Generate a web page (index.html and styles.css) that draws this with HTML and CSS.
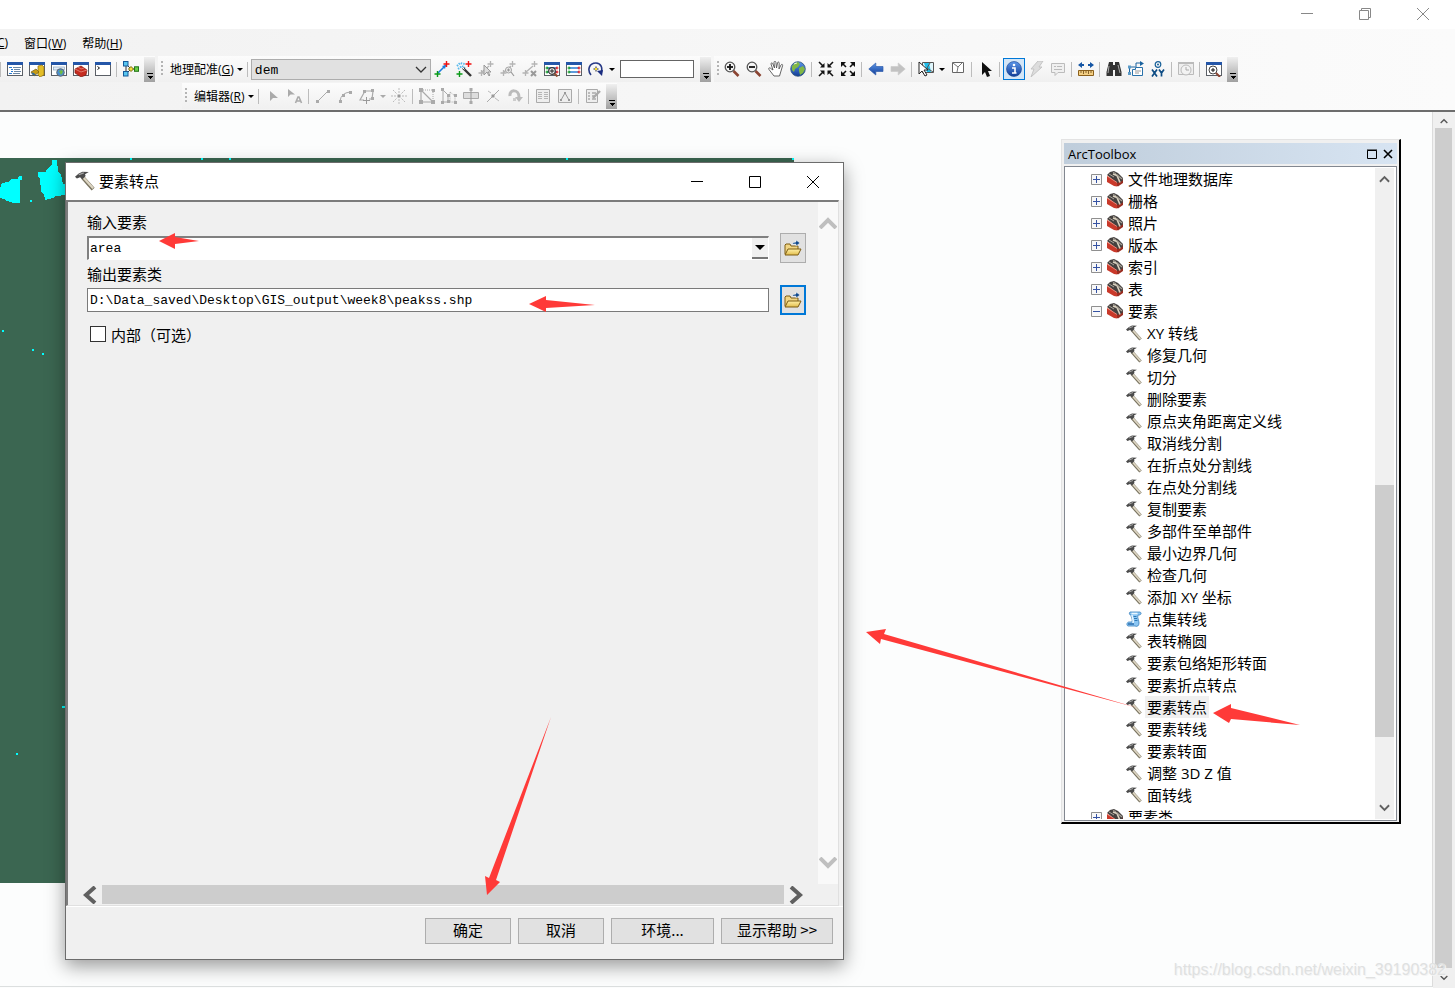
FILE: index.html
```html
<!DOCTYPE html>
<html lang="zh-CN">
<head>
<meta charset="utf-8">
<title>ArcMap</title>
<link rel="stylesheet" href="styles.css">
</head>
<body>
<svg class="defs" aria-hidden="true">
  <defs>
    <linearGradient id="gBlue" x1="0" y1="0" x2="0" y2="1"><stop offset="0" stop-color="#5b97ea"/><stop offset="1" stop-color="#123c96"/></linearGradient>
    <linearGradient id="gGold" x1="0" y1="0" x2="0" y2="1"><stop offset="0" stop-color="#fff0a8"/><stop offset="1" stop-color="#e2bd4c"/></linearGradient>
    <symbol id="win" viewBox="0 0 16 16"><rect x=".5" y="1.500" width="15" height="13" fill="#fff" stroke="#5a5f66"/><path d="M0 1h16v3H0z" fill="#2456a8"/></symbol>
    <symbol id="toc" viewBox="0 0 16 16"><use href="#win"/><path d="M2 6.500h3M4 8.500h2M4 10.500h2M2 12.500h3" stroke="#2a7bd0"/><path d="M6 6.500h8M7 8.500h6M7 10.500h7M6 12.500h7" stroke="#6a86a4"/></symbol>
    <symbol id="catalog" viewBox="0 0 16 16"><use href="#win"/><path d="M9 5l4-1 2 2v8l-4 2-2-2z" fill="#e3bd27" stroke="#8b6c10" stroke-width=".7"/><path d="M2 11l5-3 3 3-5 4z" fill="#c79b14" stroke="#6f5a16" stroke-width=".7"/><path d="M3 12l3 2" stroke="#326a9a" stroke-width="2"/></symbol>
    <symbol id="search" viewBox="0 0 16 16"><use href="#win"/><rect x="2.500" y="6" width="11" height="3" fill="#e3edf8" stroke="#8ca5bd" stroke-width=".7"/><circle cx="9.500" cy="11.500" r="3.800" fill="#4b8fd0" stroke="#606870"/><path d="M8 10l3-1 1 2-2 3z" fill="#6fbb42"/></symbol>
    <symbol id="toolwin" viewBox="0 0 16 16"><use href="#win"/><path d="M2 8l6-3 6 4-1 5-5 2-6-4z" fill="#c52c20" stroke="#7c170f" stroke-width=".7"/><path d="M2 8l6 3 6-2M5 6l3 2 3-1" fill="none" stroke="#e98d80" stroke-width=".8"/></symbol>
    <symbol id="python" viewBox="0 0 16 16"><use href="#win"/><path d="M2.500 5.500l2 1.500-2 1.500" fill="none" stroke="#111"/></symbol>
    <symbol id="model" viewBox="0 0 16 16"><path d="M3 3v10M3 3l5 5-5 5M8 8h5" fill="none" stroke="#333"/><rect x=".500" y=".500" width="4.500" height="4.500" fill="#58c6ef" stroke="#155a9a"/><rect x=".500" y="10.500" width="4.500" height="4.500" fill="#58c6ef" stroke="#155a9a"/><path d="M8 5.500l2.500 2.500L8 10.500 5.500 8z" fill="#f4dd3a" stroke="#756811"/><rect x="11.500" y="5.800" width="4" height="4.500" fill="#6bcf46" stroke="#23751a"/></symbol>
    <symbol id="addpt" viewBox="0 0 16 16"><path d="M4 12l8-8" stroke="#1c7ddd" stroke-width="1.600"/><path d="M12 4l-4 1 3 3z" fill="#1c7ddd"/><path d="M12.500 0v6M9.500 3h6" stroke="#e11" stroke-width="1.400"/><path d="M3.500 10v6M.500 13h6" stroke="#0a9a18" stroke-width="1.400"/></symbol>
    <symbol id="wand" viewBox="0 0 16 16"><path d="M1 5l3-3 5 1M2 8l4-3 3 2" fill="none" stroke="#58b9ec" stroke-width="2" stroke-dasharray="1.500 1"/><path d="M7 7l8 8" stroke="#333" stroke-width="2.400"/><path d="M6.500 6.500l2 2" stroke="#fff"/><path d="M12.500 0v6M9.500 3h6" stroke="#e11" stroke-width="1.400"/><path d="M3.500 10v6M.500 13h6" stroke="#0a9a18" stroke-width="1.400"/></symbol>
    <symbol id="gpt" viewBox="0 0 16 16"><path d="M12.500 0v6M9.500 3h6M3.500 9v6M.500 12h6M4 11l7-6" stroke="#b4b4b4" stroke-width="1.300"/></symbol>
    <symbol id="gptsel" viewBox="0 0 16 16"><use href="#gpt"/><path d="M6 4v10l3-3 2 4 1-1-2-3h3z" fill="#ddd" stroke="#999"/></symbol>
    <symbol id="gptzoom" viewBox="0 0 16 16"><use href="#gpt"/><circle cx="8.500" cy="9" r="3" fill="#eee" stroke="#a3a3a3"/><path d="M7 9h3M8.500 7.500v3M11 11l3 4" stroke="#999" stroke-width="1.200"/></symbol>
    <symbol id="gptdel" viewBox="0 0 16 16"><use href="#gpt"/><path d="M9 10l5 5M14 10l-5 5" stroke="#999" stroke-width="2"/></symbol>
    <symbol id="table" viewBox="0 0 16 16"><use href="#win"/><path d="M3 7h10M3 11h10" stroke="#2a7bd0" stroke-width="1.400"/><path d="M3 5.500v3M3 9.500v3M1.500 7h3M1.500 11h3" stroke="#0a9a18"/><path d="M13 5.500v3M13 9.500v3M11.500 7h3M11.500 11h3" stroke="#e11"/></symbol>
    <symbol id="tablezoom" viewBox="0 0 16 16"><use href="#table"/><circle cx="8" cy="10" r="3.300" fill="#eee" stroke="#333" stroke-width="1.200"/><path d="M6 10h4M8 8v4" stroke="#222"/><path d="M10.500 12.500l3 3" stroke="#8b4b31" stroke-width="2"/></symbol>
    <symbol id="rotate" viewBox="0 0 16 16"><path d="M3 14C-1 9 1 2 8 2c5 0 7 5 5 10" fill="none" stroke="#273985" stroke-width="1.600"/><path d="M9 10l6-1-1 6z" fill="#1a2c80"/><path d="M5.500 8h5M8 5.500v5" stroke="#222"/><path d="M7 7h2v2H7z" fill="#ffe12a"/></symbol>
    <symbol id="mag" viewBox="0 0 16 16"><path d="M9.500 10l5 5" stroke="#8b4432" stroke-width="2.600"/><circle cx="6" cy="6" r="4.800" fill="#f4f4f4" stroke="#555" stroke-width="1.300"/><path d="M3 6h6" stroke="#111" stroke-width="1.800"/></symbol>
    <symbol id="magplus" viewBox="0 0 16 16"><use href="#mag"/><path d="M6 3v6" stroke="#111" stroke-width="1.800"/></symbol>
    <symbol id="hand" viewBox="0 0 16 16"><path d="M6 15L1 8.500c-1-2 1-2 2-.8L5 9 3 3c0-1.500 1.300-1.500 1.800-.3L6.500 7 6 1.600C6-.2 7.600-.2 7.900 1.500L8.500 7l1-5c.3-1.500 1.700-1.200 1.700.2L11 8l2-4c.7-1.200 2-.7 1.600.7L13 10l-1.500 5z" fill="#fff" stroke="#555" stroke-width=".9"/></symbol>
    <symbol id="globe" viewBox="0 0 16 16"><circle cx="8" cy="8" r="7.300" fill="url(#gBlue)" stroke="#31567a" stroke-width=".8"/><path d="M2 5l3-3 3-1 2 2-2 3-3 2-1 3-2-2zM9 7l4-2 2 3-2 4-3 2-1-4z" fill="#82b845"/><path d="M4 3l3-1" stroke="#eef6cf"/></symbol>
    <symbol id="inward" viewBox="0 0 16 16"><path d="M1 1l4 4M15 1l-4 4M1 15l4-4M15 15l-4-4" stroke="#111" stroke-width="1.600"/><path d="M6.500 2v4.500H2zM9.500 2v4.500H14zM6.500 14V9.500H2zM9.500 14V9.500H14z" fill="#111"/></symbol>
    <symbol id="outward" viewBox="0 0 16 16"><path d="M2 2l4 4M14 2l-4 4M2 14l4-4M14 14l-4-4" stroke="#111" stroke-width="1.600"/><path d="M1 1h5L1 6zM15 1h-5l5 5zM1 15h5l-5-5zM15 15h-5l5-5z" fill="#111"/></symbol>
    <symbol id="back" viewBox="0 0 16 16"><path d="M.800 8l7-6v3.500H15v5H7.800V14z" fill="url(#gBlue)" stroke="#315fae" stroke-width=".7"/></symbol>
    <symbol id="forward" viewBox="0 0 16 16"><path d="M15.200 8l-7-6v3.500H1v5h7.200V14z" fill="#c2c2c2" stroke="#ccc" stroke-width=".7"/></symbol>
    <symbol id="selfeat" viewBox="0 0 16 16"><path d="M4.500 1.500h11v10h-11z" fill="#dff6fc" stroke="#555"/><path d="M6 2h5l2 9H9z" fill="#20bdea"/><path d="M12 2l-3 5 6 4" fill="none" stroke="#555"/><path d="M1 1v12l3-3 3 5 2-1-3-5h4z" fill="#fff" stroke="#222"/></symbol>
    <symbol id="clearsel" viewBox="0 0 16 16"><path d="M2.500 1.500h11v10h-11z" fill="#fff" stroke="#666"/><path d="M3 2l5 4 4-4M8 6l-1 5" fill="none" stroke="#777"/></symbol>
    <symbol id="pointer" viewBox="0 0 16 16"><path d="M4 1v13l3-3 2 5 3-1-2-5h4z" fill="#111"/></symbol>
    <symbol id="info" viewBox="0 0 16 16"><circle cx="8" cy="8" r="7.500" fill="url(#gBlue)" stroke="#16418e" stroke-width=".6"/><circle cx="8" cy="4" r="1.300" fill="#fff"/><path d="M6 7h3v5h1.500M6 12h4" fill="none" stroke="#fff" stroke-width="1.600"/></symbol>
    <symbol id="bolt" viewBox="0 0 16 16"><path d="M10 0h5l-4 6h3L3 16l3-8H3z" fill="#ddd" stroke="#c4c4c4"/></symbol>
    <symbol id="popup" viewBox="0 0 16 16"><path d="M1.500 2.500h13v9H8l-3 3v-3H1.500z" fill="#f0f0f0" stroke="#bcbcbc"/><path d="M4 5.500h2M7 5.500h5M4 8.500h8" stroke="#bbb"/></symbol>
    <symbol id="measure" viewBox="0 0 16 16"><path d="M0 4l4-3v2h2v2H4v2zM16 4l-4-3v2h-2v2h2v2z" fill="#1556a5"/><path d="M.500 9.500h15v5H.500z" fill="#f4cf83" stroke="#8b601c"/><path d="M3 10v2M5.500 10v3M8 10v2M10.500 10v3M13 10v2" stroke="#6a4814" stroke-width=".8"/></symbol>
    <symbol id="find" viewBox="0 0 16 16"><path d="M3 1h4v3h2V1h4l2.500 10v4H9V9H7v6H.500v-4z" fill="#333"/><path d="M3 5l-1 7M12 4l2 8" stroke="#aaa"/></symbol>
    <symbol id="route" viewBox="0 0 16 16"><path d="M1.500 12V6h6M8 6V2h5" fill="none" stroke="#1a639f"/><path d="M12 0l4 2.500-4 2.500z" fill="#1a639f"/><path d="M4.500 8.500h3v-2h7v8h-10z" fill="#fff" stroke="#2871aa"/><path d="M7 10h6M7 12h4" stroke="#999"/><path d="M0 11h3v3H0zM0 4.500h3v3H0z" fill="#5c9bc8"/></symbol>
    <symbol id="xy" viewBox="0 0 16 16"><circle cx="8" cy="3.500" r="2.800" fill="none" stroke="#176099" stroke-width="1.200"/><circle cx="8" cy="3.500" r="1" fill="#176099"/><path d="M2 8.500l5 7M7 8.500l-5 7M9 8.500l2.500 3.500L14 8.500M11.500 12v3.500" fill="none" stroke="#0d4c84" stroke-width="1.700"/></symbol>
    <symbol id="time" viewBox="0 0 16 16"><path d="M.500 1.500h15v12H.500z" fill="#eee" stroke="#bbb"/><path d="M0 1h16v2H0z" fill="#bbb"/><circle cx="8" cy="9" r="5" fill="#f3f3f3" stroke="#bbb"/><path d="M8 6v3h3" fill="none" stroke="#aaa"/></symbol>
    <symbol id="viewer" viewBox="0 0 16 16"><use href="#win"/><circle cx="7" cy="9" r="4" fill="#fff" stroke="#444"/><path d="M5 9h4M7 7v4" stroke="#111"/><path d="M10 12l4 4" stroke="#8b4432" stroke-width="2"/></symbol>
    <symbol id="edit" viewBox="0 0 16 16"><path d="M5 3v10l3-3h5z" fill="#aaa"/></symbol>
    <symbol id="edita" viewBox="0 0 16 16"><path d="M1 1v8l2.500-2.500H8z" fill="#aaa"/><path d="M8.500 15l2.500-6h1l2.500 6M9.500 13h4" fill="none" stroke="#aaa" stroke-width="1.600"/></symbol>
    <symbol id="seg" viewBox="0 0 16 16"><path d="M3 13L13 3" stroke="#aaa"/><path d="M1 12h3v3H1zM12 2h3v3h-3z" fill="#aaa"/></symbol>
    <symbol id="arc" viewBox="0 0 16 16"><path d="M3 13q1-8 10-9" fill="none" stroke="#aaa"/><path d="M2 12h3v3H2zM12 3h3v3h-3zM5 6h3v3H5z" fill="#aaa"/></symbol>
    <symbol id="trace" viewBox="0 0 16 16"><path d="M5 12H1l5-9h8l-1 8h-3" fill="none" stroke="#aaa" stroke-width="1.200"/><path d="M4 2h3v3H4zM12 1h3v3h-3zM12 9h3v3h-3z" fill="#aaa"/><path d="M7.500 9v7M4 12.500h7" stroke="#999"/></symbol>
    <symbol id="burst" viewBox="0 0 16 16"><path d="M8 0v5M8 11v5M0 8h5M11 8h5M2 2l4 4M14 2l-4 4M2 14l4-4M14 14l-4-4" stroke="#bbb" stroke-dasharray="2 1"/><path d="M6.500 6.500h3v3h-3z" fill="#999"/></symbol>
    <symbol id="vert" viewBox="0 0 16 16"><path d="M2 2v12h12z" fill="none" stroke="#aaa" stroke-width="1.200"/><path d="M2 2h12v12" fill="none" stroke="#aaa" stroke-dasharray="1 1"/><path d="M0 0h4v4H0zM0 12h4v4H0zM12 12h4v4h-4zM13 1h3v3h-3z" fill="#aaa"/></symbol>
    <symbol id="reshape" viewBox="0 0 16 16"><path d="M2 2v12h5V7z" fill="none" stroke="#aaa"/><path d="M9 4l5 4v6H9z" fill="none" stroke="#aaa" stroke-dasharray="1 1"/><path d="M0 0h3v3H0zM0 13h3v3H0zM6 12h3v3H6zM6 6h3v3H6zM13 6h3v3h-3zM13 13h3v3h-3z" fill="#aaa"/></symbol>
    <symbol id="cut" viewBox="0 0 16 16"><path d="M.500 4.500h15v6H.500z" fill="#ddd" stroke="#aaa"/><path d="M8 1v14" stroke="#999"/><path d="M6.500 0h3v3h-3zM6.500 13h3v3h-3z" fill="#aaa"/></symbol>
    <symbol id="split" viewBox="0 0 16 16"><path d="M2 14L14 2" stroke="#aaa"/><path d="M3 3l3 2M10 10l4 3" stroke="#bbb"/><path d="M6.500 6.500h3v3h-3z" fill="#999"/></symbol>
    <symbol id="turn" viewBox="0 0 16 16"><path d="M3 8C2 1 12 1 12 9" fill="none" stroke="#bbb" stroke-width="3"/><path d="M8 9h8l-4 5z" fill="#bbb"/><path d="M6 10h3v3H6z" fill="#ccc"/></symbol>
    <symbol id="attr" viewBox="0 0 16 16"><path d="M1.500 1.500h13v13h-13z" fill="#eee" stroke="#aaa"/><path d="M3 4.500h4M3 6.500h4M3 8.500h4M3 10.500h4M9 4.500h4M9 6.500h4M9 8.500h4M9 10.500h4" stroke="#b6b6b6"/></symbol>
    <symbol id="sketch" viewBox="0 0 16 16"><path d="M1.500 1.500h13v13h-13z" fill="#eee" stroke="#aaa"/><path d="M4 12l4-7 4 7" fill="none" stroke="#999"/><path d="M7 4h2v2H7zM3 11h2v2H3zM11 11h2v2h-2z" fill="#999"/></symbol>
    <symbol id="create" viewBox="0 0 16 16"><path d="M1.500 1.500h11v13h-11z" fill="#eee" stroke="#aaa"/><path d="M3 5h2M3 8h2M3 11h2M7 5h4M7 8h3M7 11h4" stroke="#aaa" stroke-width="1.300"/><path d="M8 10l7-7" stroke="#aaa" stroke-width="2.400"/></symbol>
    <symbol id="hammer" viewBox="0 0 16 16"><path d="M6 5l8.500 9.500" stroke="#78725f" stroke-width="3.200"/><path d="M6.500 5l8 8.800" stroke="#ddd5c2" stroke-width="1.800"/><path d="M0 4.500L3 2l3-1.500 5 .3L8 2.500 8.500 4 6 6.500 4 5 1.500 6z" fill="#4b4b4b"/><path d="M3 3l4-1.500" stroke="#a6a6a6"/></symbol>
    <symbol id="toolbox" viewBox="0 0 16 16"><path d="M0 5l10 6v4.500L7 15 0 11z" fill="#c9392a"/><path d="M10 11l6-3v4l-5 3.500-1-.5z" fill="#9a2c20"/><path d="M0 4l3-3 4-1 4 2 5 5-.5 3L10 12z" fill="#45413f"/><path d="M0 5l10 6.500" stroke="#ec8575"/><path d="M2 3l5 3M6 1.500l3 1" stroke="#aaa49b"/><path d="M6 3l4 1.500 3 7" fill="none" stroke="#dcd3c0" stroke-width="1.600"/><path d="M10 4l5 4" stroke="#a8a196" stroke-width="1.300"/></symbol>
    <symbol id="script" viewBox="0 0 16 16"><path d="M4 1h10c2 1 1 3-1 3h-1c-1 3 1 5 1 8 0 3-2 4-4 3H2c-2-1-1-4 1-4h3c1-3-1-4-1-7-2 0-2-2-1-3z" fill="#8bc6f3" stroke="#3b82bd" stroke-width=".8"/><path d="M5.500 2.500h6M6 4c0 3 2 5 1 8" fill="none" stroke="#eaf7ff" stroke-width="1.500"/><path d="M7.500 5.500h3M8 7.500h3M8.500 9.500h3" stroke="#236fae" stroke-width=".9"/><path d="M2 13h6" stroke="#2b6cad" stroke-width="1.500"/></symbol>
    <symbol id="folder" viewBox="0 0 18 16"><path d="M1 14V5l1-1h4l1 2h7v3" fill="#f0d584" stroke="#7c5c12"/><path d="M1 15l3-6h13l-3 6z" fill="url(#gGold)" stroke="#7c5c12"/><path d="M8 4q1-2 4-2V0l4 3-4 3V4z" fill="#11498c" stroke="#fff" stroke-width=".5"/></symbol>
    <symbol id="plus" viewBox="0 0 11 11"><path d="M.500.500h10v10H.500z" fill="#f8f8f8" stroke="#8f8f8f"/><path d="M2 5.500h7M5.500 2v7" stroke="#3552a3"/></symbol>
    <symbol id="minus" viewBox="0 0 11 11"><path d="M.500.500h10v10H.500z" fill="#f8f8f8" stroke="#8f8f8f"/><path d="M2 5.500h7" stroke="#3552a3"/></symbol>
    <symbol id="min" viewBox="0 0 12 12"><path d="M0 5.500h12" stroke="currentColor"/></symbol>
    <symbol id="max" viewBox="0 0 12 12"><path d="M.500.500h11v11H.500z" fill="none" stroke="currentColor"/></symbol>
    <symbol id="restore" viewBox="0 0 12 12"><path d="M.500 2.500h9v9h-9zM2.500 2V.500h9v9H10" fill="none" stroke="currentColor"/></symbol>
    <symbol id="close" viewBox="0 0 12 12"><path d="M0 0l12 12M12 0L0 12" stroke="currentColor"/></symbol>
    <symbol id="thindown" viewBox="0 0 12 8"><path d="M1 1l5 5 5-5" fill="none" stroke="currentColor" stroke-width="1.300"/></symbol>
    <symbol id="down" viewBox="0 0 12 8"><path d="M1 1l5 5 5-5" fill="none" stroke="currentColor" stroke-width="2"/></symbol>
    <symbol id="up" viewBox="0 0 12 8"><path d="M1 7l5-5 5 5" fill="none" stroke="currentColor" stroke-width="2"/></symbol>
  </defs>
</svg>

<div class="app">
  <header class="titlebar">
    <button class="winbtn" aria-label="最小化"><svg><use href="#min"/></svg></button>
    <button class="winbtn" aria-label="还原"><svg><use href="#restore"/></svg></button>
    <button class="winbtn" aria-label="关闭"><svg><use href="#close"/></svg></button>
  </header>

  <div class="bars">
    <nav class="menu">
      <button class="menu-first"><u>C</u>)</button>
      <button>窗口(<u>W</u>)</button>
      <button>帮助(<u>H</u>)</button>
    </nav>
    <div class="bar-row">
      <div class="toolbar first">
        <i class="line"></i>
        <button class="tool" aria-label="内容列表"><svg><use href="#toc"/></svg></button>
        <button class="tool" aria-label="目录"><svg><use href="#catalog"/></svg></button>
        <button class="tool" aria-label="搜索"><svg><use href="#search"/></svg></button>
        <button class="tool" aria-label="工具箱"><svg><use href="#toolwin"/></svg></button>
        <button class="tool" aria-label="Python"><svg><use href="#python"/></svg></button>
        <i class="line"></i>
        <button class="tool" aria-label="模型构建器"><svg><use href="#model"/></svg></button>
        <button class="more" aria-label="更多"></button>
      </div>
      <div class="toolbar">
        <i class="grip"></i>
        <button class="label"><span>地理配准(<u>G</u>)</span><i class="tri"></i></button>
        <i class="line"></i>
        <div class="layer"><select aria-label="图层"><option>dem</option></select><svg><use href="#thindown"/></svg></div>
        <button class="tool" aria-label="添加控制点"><svg><use href="#addpt"/></svg></button>
        <button class="tool" aria-label="自动配准"><svg><use href="#wand"/></svg></button>
        <button class="tool" aria-label="选择连接"><svg><use href="#gptsel"/></svg></button>
        <button class="tool" aria-label="缩放至连接"><svg><use href="#gptzoom"/></svg></button>
        <button class="tool" aria-label="删除连接"><svg><use href="#gptdel"/></svg></button>
        <button class="tool" aria-label="查看器"><svg><use href="#tablezoom"/></svg></button>
        <button class="tool" aria-label="连接表"><svg><use href="#table"/></svg></button>
        <button class="tool" aria-label="旋转"><svg><use href="#rotate"/></svg></button>
        <button class="drop" aria-label="旋转选项"><i class="tri"></i></button>
        <input class="angle" type="text" aria-label="角度">
        <button class="more" aria-label="更多"></button>
      </div>
      <div class="toolbar">
        <i class="grip"></i>
        <button class="tool" aria-label="放大"><svg><use href="#magplus"/></svg></button>
        <button class="tool" aria-label="缩小"><svg><use href="#mag"/></svg></button>
        <button class="tool" aria-label="平移"><svg><use href="#hand"/></svg></button>
        <button class="tool" aria-label="全图"><svg><use href="#globe"/></svg></button>
        <i class="line"></i>
        <button class="tool" aria-label="固定比例放大"><svg><use href="#inward"/></svg></button>
        <button class="tool" aria-label="固定比例缩小"><svg><use href="#outward"/></svg></button>
        <i class="line"></i>
        <button class="tool" aria-label="上一视图"><svg><use href="#back"/></svg></button>
        <button class="tool" aria-label="下一视图"><svg><use href="#forward"/></svg></button>
        <i class="line"></i>
        <button class="tool" aria-label="选择要素"><svg><use href="#selfeat"/></svg></button>
        <button class="drop" aria-label="选择方式"><i class="tri"></i></button>
        <button class="tool" aria-label="清除选择"><svg><use href="#clearsel"/></svg></button>
        <i class="line"></i>
        <button class="tool" aria-label="选择元素"><svg><use href="#pointer"/></svg></button>
        <i class="line"></i>
        <button class="tool active" aria-label="识别"><svg><use href="#info"/></svg></button>
        <button class="tool" aria-label="超链接"><svg><use href="#bolt"/></svg></button>
        <button class="tool" aria-label="弹出窗口"><svg><use href="#popup"/></svg></button>
        <i class="line"></i>
        <button class="tool" aria-label="测量"><svg><use href="#measure"/></svg></button>
        <i class="line"></i>
        <button class="tool" aria-label="查找"><svg><use href="#find"/></svg></button>
        <button class="tool" aria-label="查找路径"><svg><use href="#route"/></svg></button>
        <button class="tool" aria-label="转到 XY"><svg><use href="#xy"/></svg></button>
        <i class="line"></i>
        <button class="tool" aria-label="时间滑块"><svg><use href="#time"/></svg></button>
        <i class="line"></i>
        <button class="tool" aria-label="查看器窗口"><svg><use href="#viewer"/></svg></button>
        <button class="more" aria-label="更多"></button>
      </div>
    </div>
    <div class="bar-row second">
      <div class="toolbar">
        <i class="grip"></i>
        <button class="label"><span>编辑器(<u>R</u>)</span><i class="tri"></i></button>
        <i class="line"></i>
        <button class="tool" aria-label="编辑工具"><svg><use href="#edit"/></svg></button>
        <button class="tool" aria-label="编辑注记"><svg><use href="#edita"/></svg></button>
        <i class="line"></i>
        <button class="tool" aria-label="直线段"><svg><use href="#seg"/></svg></button>
        <button class="tool" aria-label="弧段"><svg><use href="#arc"/></svg></button>
        <button class="tool" aria-label="追踪"><svg><use href="#trace"/></svg></button>
        <button class="drop dim" aria-label="追踪选项"><i class="tri"></i></button>
        <button class="tool" aria-label="点"><svg><use href="#burst"/></svg></button>
        <i class="line"></i>
        <button class="tool" aria-label="编辑折点"><svg><use href="#vert"/></svg></button>
        <button class="tool" aria-label="整形"><svg><use href="#reshape"/></svg></button>
        <button class="tool" aria-label="裁剪面"><svg><use href="#cut"/></svg></button>
        <button class="tool" aria-label="分割"><svg><use href="#split"/></svg></button>
        <button class="tool" aria-label="旋转要素"><svg><use href="#turn"/></svg></button>
        <i class="line"></i>
        <button class="tool" aria-label="属性"><svg><use href="#attr"/></svg></button>
        <button class="tool" aria-label="草图属性"><svg><use href="#sketch"/></svg></button>
        <i class="line"></i>
        <button class="tool" aria-label="创建要素"><svg><use href="#create"/></svg></button>
        <button class="more" aria-label="更多"></button>
      </div>
    </div>
  </div>

  <main class="workspace">
    <section class="canvas">
      <div class="map">
        <svg class="peaks" fill="#00ffff" shape-rendering="crispEdges">
          <path d="M0 30l2-5 6-1 4-3h6l1-3h3v4h-2v23h-6l-7-2-3-2-4-1zM52 2h5l1 12 3 2 2 10 3 1v10l-11 1-2 2-8 2-1-6-3-2-1-14-2-1v-5h8l1-3 5-5z"/>
          <path d="M30 42h2v2h-2zM2 172h2v2H2zM32 191h2v2h-2zM42 195h2v2h-2zM130 0h2v2h-2zM201 0h2v2h-2zM229 0h2v2h-2zM566 0h2v2h-2zM792 0h2v2h-2zM62 548h3v2h-3zM16 595h2v2h-2z"/>
        </svg>
      </div>

      <form class="dialog">
        <header class="dialog-title">
          <svg class="dialog-icon"><use href="#hammer"/></svg>
          <h1>要素转点</h1>
          <button type="button" class="winbtn" aria-label="最小化"><svg><use href="#min"/></svg></button>
          <button type="button" class="winbtn" aria-label="最大化"><svg><use href="#max"/></svg></button>
          <button type="button" class="winbtn" aria-label="关闭"><svg><use href="#close"/></svg></button>
        </header>
        <div class="pane">
          <div class="fields">
            <label for="in">输入要素</label>
            <div class="combo"><select id="in"><option>area</option></select><span class="combo-btn"><i class="tri"></i></span></div>
            <button type="button" class="browse" aria-label="浏览输入"><svg><use href="#folder"/></svg></button>
            <label for="out">输出要素类</label>
            <input id="out" class="path" type="text" value="D:\Data_saved\Desktop\GIS_output\week8\peakss.shp">
            <button type="button" class="browse focus" aria-label="浏览输出"><svg><use href="#folder"/></svg></button>
            <div class="check"><input type="checkbox" id="inside"><label for="inside">内部（可选）</label></div>
          </div>
          <div class="vscroll">
            <svg viewBox="0 0 18 12"><path d="M1 11l8-8 8 8" fill="none" stroke="#bfbfbf" stroke-width="4"/></svg>
            <svg viewBox="0 0 18 12"><path d="M1 1l8 8 8-8" fill="none" stroke="#bfbfbf" stroke-width="4"/></svg>
          </div>
          <div class="hscroll">
            <svg viewBox="0 0 14 18"><path d="M12 1L3 9l9 8" fill="none" stroke="#606060" stroke-width="4"/></svg>
            <div class="hthumb"></div>
            <svg viewBox="0 0 14 18"><path d="M2 1l9 8-9 8" fill="none" stroke="#606060" stroke-width="4"/></svg>
          </div>
        </div>
        <footer class="actions">
          <button type="button" class="small">确定</button>
          <button type="button" class="small">取消</button>
          <button type="button" class="medium">环境...</button>
          <button type="button" class="large">显示帮助 &gt;&gt;</button>
        </footer>
      </form>

      <aside class="toolbox">
        <header class="toolbox-title">
          <h2>ArcToolbox</h2>
          <button aria-label="最大化"><svg viewBox="0 0 10 10"><path d="M.500 1.500h9v8h-9zM0 1h10" fill="none" stroke="#000"/></svg></button>
          <button aria-label="关闭"><svg viewBox="0 0 10 10"><path d="M1 1l8 8M9 1L1 9" stroke="#000" stroke-width="1.600"/></svg></button>
        </header>
        <div class="tree-box">
          <ul class="tree">
            <li><svg class="exp"><use href="#plus"/></svg><svg><use href="#toolbox"/></svg><span>文件地理数据库</span></li>
            <li><svg class="exp"><use href="#plus"/></svg><svg><use href="#toolbox"/></svg><span>栅格</span></li>
            <li><svg class="exp"><use href="#plus"/></svg><svg><use href="#toolbox"/></svg><span>照片</span></li>
            <li><svg class="exp"><use href="#plus"/></svg><svg><use href="#toolbox"/></svg><span>版本</span></li>
            <li><svg class="exp"><use href="#plus"/></svg><svg><use href="#toolbox"/></svg><span>索引</span></li>
            <li><svg class="exp"><use href="#plus"/></svg><svg><use href="#toolbox"/></svg><span>表</span></li>
            <li><svg class="exp"><use href="#minus"/></svg><svg><use href="#toolbox"/></svg><span>要素</span></li>
            <li class="leaf"><svg><use href="#hammer"/></svg><span>XY 转线</span></li>
            <li class="leaf"><svg><use href="#hammer"/></svg><span>修复几何</span></li>
            <li class="leaf"><svg><use href="#hammer"/></svg><span>切分</span></li>
            <li class="leaf"><svg><use href="#hammer"/></svg><span>删除要素</span></li>
            <li class="leaf"><svg><use href="#hammer"/></svg><span>原点夹角距离定义线</span></li>
            <li class="leaf"><svg><use href="#hammer"/></svg><span>取消线分割</span></li>
            <li class="leaf"><svg><use href="#hammer"/></svg><span>在折点处分割线</span></li>
            <li class="leaf"><svg><use href="#hammer"/></svg><span>在点处分割线</span></li>
            <li class="leaf"><svg><use href="#hammer"/></svg><span>复制要素</span></li>
            <li class="leaf"><svg><use href="#hammer"/></svg><span>多部件至单部件</span></li>
            <li class="leaf"><svg><use href="#hammer"/></svg><span>最小边界几何</span></li>
            <li class="leaf"><svg><use href="#hammer"/></svg><span>检查几何</span></li>
            <li class="leaf"><svg><use href="#hammer"/></svg><span>添加 XY 坐标</span></li>
            <li class="leaf"><svg><use href="#script"/></svg><span>点集转线</span></li>
            <li class="leaf"><svg><use href="#hammer"/></svg><span>表转椭圆</span></li>
            <li class="leaf"><svg><use href="#hammer"/></svg><span>要素包络矩形转面</span></li>
            <li class="leaf"><svg><use href="#hammer"/></svg><span>要素折点转点</span></li>
            <li class="leaf"><svg><use href="#hammer"/></svg><span class="picked">要素转点</span></li>
            <li class="leaf"><svg><use href="#hammer"/></svg><span>要素转线</span></li>
            <li class="leaf"><svg><use href="#hammer"/></svg><span>要素转面</span></li>
            <li class="leaf"><svg><use href="#hammer"/></svg><span>调整 3D Z 值</span></li>
            <li class="leaf"><svg><use href="#hammer"/></svg><span>面转线</span></li>
            <li><svg class="exp"><use href="#plus"/></svg><svg><use href="#toolbox"/></svg><span>要素类</span></li>
          </ul>
          <div class="tree-scroll"><svg><use href="#up"/></svg><i class="gap-top"></i><i class="thumb"></i><i class="gap-bottom"></i><svg><use href="#down"/></svg></div>
        </div>
      </aside>
    </section>
    <div class="page-scroll"><svg><use href="#up"/></svg><i class="thumb"></i><svg><use href="#down"/></svg></div>
  </main>
  <svg class="arrows" viewBox="0 0 1455 988" fill="#ff3a38">
    <path d="M159 241l16-8v4l24 4-24 3v5z"/>
    <path d="M529 304l17-8v4l49 5-49 3v4z"/>
    <path d="M866 632l20-3-2 5 254 74-257-69-1 5z"/>
    <path d="M1213 713l18-9v4l69 17-69-6-2 4z"/>
    <path d="M551 717l-55 163 4 2-13 13-2-19 4 2z"/>
  </svg>
  <p class="watermark">https://blog.csdn.net/weixin_39190382</p>
</div>
</body>
</html>
```
FILE: styles.css
```css
* { box-sizing: border-box; }
body { margin: 0; font-family: "Open Sans", "Noto Sans CJK SC", sans-serif; font-size: 12px; color: #000; }
button, input, select { font: inherit; color: inherit; margin: 0; }
button { background: none; border: 0; padding: 0; }
svg { display: block; flex: none; }
.defs { position: absolute; width: 0; height: 0; }
.app { position: relative; display: flex; flex-direction: column; min-height: 100vh; overflow: hidden; background: #fff; }

.titlebar { display: flex; justify-content: flex-end; height: 29px; padding: 0 3px 1px 0; color: #888; }
.winbtn { width: 58px; display: flex; align-items: center; justify-content: center; }
.winbtn svg { width: 12px; height: 12px; }

.bars { padding-bottom: 1px; background: linear-gradient(90deg, #f2f2f2, #fbfbfb); border-bottom: 2px solid #6d6d6d; }
.menu { display: flex; gap: 16px; height: 27px; align-items: center; }
.menu-first { margin-left: -3px; }
.bar-row { display: flex; gap: 3px; height: 26px; }
.second { margin-top: 1px; padding-left: 182px; }
.toolbar { display: flex; align-items: center; height: 26px; background: linear-gradient(#fcfcfc, #f0f0f0); }
.grip { width: 2px; height: 16px; margin: 0 2px 0 3px; background: repeating-linear-gradient(#b4b4b4 0 2px, transparent 2px 4px); }
.line { width: 1px; height: 15px; margin: 0 3px 0 2px; background: #bcbcbc; }
.first .line:first-child { margin-left: 0; }
.tool { display: flex; align-items: center; justify-content: center; width: 22px; height: 22px; }
.tool svg { width: 16px; height: 16px; }
.active { border: 1px solid #0078d7; background: #d4e6f7; }
.label { display: flex; align-items: center; gap: 3px; padding: 0 2px 0 5px; white-space: nowrap; }
.tri { width: 0; height: 0; border: 3px solid transparent; border-top-color: #000; border-bottom: 0; }
.drop { display: flex; align-items: center; justify-content: center; width: 10px; height: 22px; }
.dim .tri { border-top-color: #aaa; }
.more { width: 11px; height: 25px; margin-left: 2px; background:
  linear-gradient(#000, #000) 3px 16px / 6px 1px no-repeat,
  conic-gradient(from 315deg at 50% 100%, #000 90deg, transparent 0) 3px 19px / 6px 3px no-repeat,
  linear-gradient(#f0f0f0, #a0a0a0); }
.layer { position: relative; width: 180px; height: 21px; }
.layer select { width: 100%; height: 100%; padding: 2px 3px 0; appearance: none; border: 1px solid #adadad; border-radius: 0; background: #e1e1e1; font-family: "Liberation Mono", monospace; font-size: 13px; }
.layer svg { position: absolute; right: 4px; top: 7px; width: 12px; height: 8px; color: #333; }
.angle { width: 74px; height: 18px; margin: 0 4px 0 3px; border: 1px solid #646464; background: #fff; }

.workspace { flex: 1; display: flex; background: #fcfdfd; }
.canvas { position: relative; flex: 1; margin-bottom: 1px; border-right: 1px solid #dcdcdc; border-bottom: 1px solid #dcdfdf; }
.map { position: absolute; left: 0; right: 638px; top: 46px; bottom: 103px; background: #3b6651; }
.peaks { width: 100%; height: 100%; }
.page-scroll { width: 22px; padding: 0 3px 0 2px; display: flex; flex-direction: column; align-items: center; background: #f0f0f0; }
.page-scroll svg { width: 8px; height: 6px; margin: 6px 0 4px; color: #555; }
.page-scroll svg:last-child { margin: 7px 0; }
.thumb { width: 100%; background: #cdcdcd; }
.page-scroll .thumb { flex: 1; }

.dialog { position: absolute; left: 65px; right: 588px; top: 50px; bottom: 26px; display: flex; flex-direction: column; border: 1px solid #6c6c6c; background: #f0f0f0; box-shadow: 0 6px 18px rgba(0, 0, 0, .4); font-family: "Noto Sans CJK SC", sans-serif; font-size: 15px; }
.dialog-title { display: flex; height: 37px; padding-right: 1px; align-items: stretch; background: #fff; }
.dialog-icon { width: 20px; height: 20px; margin: 8px 4px 0 9px; }
h1 { flex: 1; margin: 0; font-size: 15px; font-weight: 400; line-height: 36px; }
.pane { flex: 1; display: grid; grid-template: 1fr 21px / 1fr 20px; margin-right: 4px; border: 2px solid; border-width: 2px 1px 1px 2px; border-color: #7c7c7c #e0e0e0 #e0e0e0 #7c7c7c; }
.fields { display: grid; grid-template-columns: 1fr 26px; column-gap: 11px; grid-auto-rows: min-content; align-items: center; align-content: start; padding: 9px 12px 0 19px; }
.fields > label { grid-column: 1 / -1; line-height: 22px; }
.combo { display: flex; height: 24px; border: 2px solid; border-width: 2px 1px 1px 2px; border-color: #808080 #fff #fff #808080; background: #fff; }
.combo select { flex: 1; appearance: none; border: 0; border-radius: 0; padding: 0 1px; background: #fff; font-family: "Liberation Mono", monospace; font-size: 13px; }
.combo-btn { display: flex; align-items: center; justify-content: center; width: 16px; background: #f0f0f0; border-bottom: 2px solid #777; }
.combo-btn .tri { border-width: 5px 5px 0; }
.path { width: 100%; height: 24px; padding: 0 2px; border: 1px solid #7a7a7a; background: #fff; font-family: "Liberation Mono", monospace; font-size: 13px; }
.browse { display: flex; align-items: center; justify-content: center; width: 26px; height: 30px; background: #e1e1e1; border: 1px solid #adadad; }
.browse svg { width: 18px; height: 16px; }
.focus { border: 2px solid #0078d7; }
.check { grid-column: 1 / -1; display: flex; align-items: center; gap: 5px; height: 22px; margin: 8px 0 0 3px; }
.check input { appearance: none; width: 16px; height: 16px; border: 1px solid #333; background: #fff; }
.vscroll { display: flex; flex-direction: column; justify-content: space-between; align-items: center; padding: 15px 0; background: #f9f9f9; }
.vscroll svg { width: 18px; height: 12px; }
.hscroll { grid-column: 1 / -1; display: flex; align-items: center; gap: 5px; padding: 1px 35px 1px 15px; }
.hscroll svg { width: 14px; height: 18px; }
.hthumb { flex: 1; height: 19px; background: #cdcdcd; }
.actions { display: flex; justify-content: flex-end; gap: 7px; height: 53px; padding: 11px 10px 15px; border-top: 1px solid #fff; }
.actions button { padding-bottom: 3px; border: 1px solid #adadad; background: #e1e1e1; line-height: 20px; }
.small { width: 86px; }
.medium { width: 103px; }
.large { width: 112px; }

.toolbox { position: absolute; right: 31px; top: 27px; bottom: 162px; width: 340px; display: flex; flex-direction: column; padding: 3px 0 1px 2px; background: #f0f0f0; border: 1px solid #e3e3e3; border-right: 2px solid #000; border-bottom: 2px solid #000; }
.toolbox-title { display: flex; align-items: center; gap: 6px; height: 21px; margin: 0 2px 2px 0; padding: 0 4px; background: linear-gradient(90deg, #bfcddb, #d7e4f2); }
h2 { flex: 1; margin: 0; font-size: 13px; font-weight: 400; }
.toolbox-title svg { width: 10px; height: 10px; }
.tree-box { flex: 1; min-height: 0; display: flex; padding: 1px 2px 1px 0; margin-right: 2px; border: 1px solid #828790; background: #fff; }
.tree { flex: 1; height: 0; min-height: 100%; overflow: hidden; margin: 0; padding: 0 0 0 26px; list-style: none; font-size: 15px; }
.tree li { display: flex; align-items: center; height: 22px; line-height: 22px; white-space: nowrap; }
.tree svg { width: 16px; height: 16px; }
.tree .exp { width: 11px; height: 11px; margin-right: 5px; }
.tree span { margin-left: 3px; padding: 0 2px; }
.leaf { padding-left: 35px; }
.picked { background: #f0f0f0; }
.tree-scroll { display: flex; flex-direction: column; align-items: center; width: 19px; padding: 7px 0; background: #f0f0f0; color: #606060; }
.tree-scroll svg { width: 11px; height: 8px; }
.gap-top { flex: 302; }
.tree-scroll .thumb { flex: 252; }
.gap-bottom { flex: 67; }

.arrows { position: absolute; left: 0; top: 0; width: 100%; height: 100%; pointer-events: none; }
.watermark { position: absolute; right: 9px; bottom: 9px; margin: 0; font: 16px/18px "Liberation Sans", Arial, sans-serif; color: #dfe1e1; text-shadow: 1px 1px 0 #f4f4f4; }
```
